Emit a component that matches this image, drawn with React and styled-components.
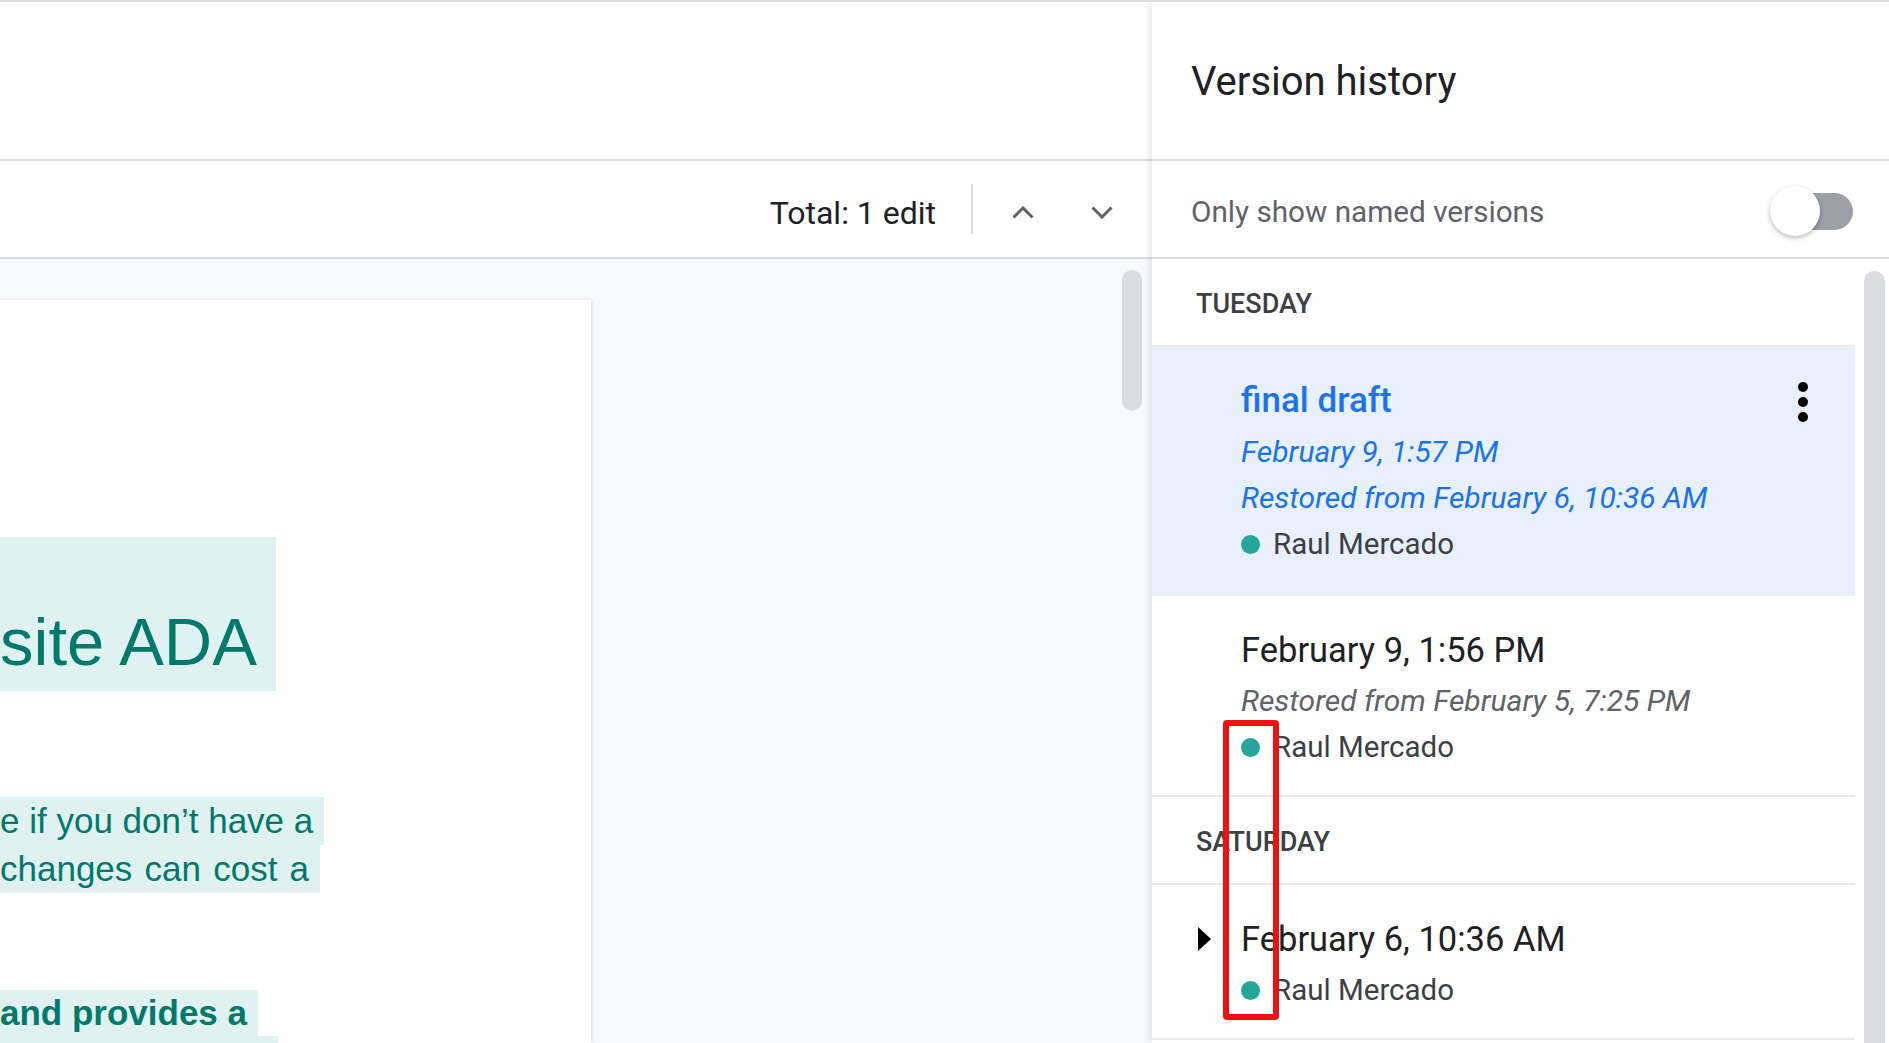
import styled, { createGlobalStyle } from "styled-components";

const GlobalStyle = createGlobalStyle`
  * {
    box-sizing: border-box;
  }
  html,
  body {
    margin: 0;
    padding: 0;
  }
  body {
    font-family: Roboto, "Liberation Sans", Arial, sans-serif;
    color: #202124;
    background: #fff;
    overflow: hidden;
  }
`;

const Shell = styled.div`
  position: relative;
  display: grid;
  grid-template-columns: 1152px 1fr;
  width: 100vw;
  height: 100vh;
  border-top: 2px solid #dadce0;
  overflow: hidden;
`;

/* ---------- left: document ---------- */

const Editor = styled.section`
  display: flex;
  flex-direction: column;
  min-width: 0;
  min-height: 0;
`;

const EditorHeader = styled.div`
  flex-shrink: 0;
  height: 159px;
  border-bottom: 2px solid #dadce0;
`;

const EditsBar = styled.div`
  flex-shrink: 0;
  height: 98px;
  display: flex;
  align-items: center;
  justify-content: flex-end;
  padding-right: 26px;
  border-bottom: 2px solid #dadce0;
`;

const EditCount = styled.span`
  margin-top: 8px;
  font-size: 32px;
  color: #202124;
`;

const BarDivider = styled.div`
  width: 2px;
  height: 50px;
  margin: 0 26px 0 35px;
  background: #dadce0;
`;

const NavButton = styled.button`
  all: unset;
  width: 48px;
  height: 48px;
  margin-top: 6px;
  display: flex;
  align-items: center;
  justify-content: center;
  cursor: pointer;
  & + & {
    margin-left: 31px;
  }
`;

const Canvas = styled.div`
  flex: 1;
  min-height: 0;
  display: flex;
  background: #f8f9fa;
  overflow: hidden;
`;

const PageColumn = styled.div`
  flex: 1;
  min-width: 0;
  padding-top: 41px;
`;

const Page = styled.div`
  width: 591px;
  height: 100%;
  padding-top: 237px;
  background: #fff;
  box-shadow: 1px 0 4px rgba(60, 64, 67, 0.16);
`;

const Heading = styled.div`
  width: fit-content;
  padding: 67px 19px 11px 0;
  font: 400 67px/76px "Liberation Sans", Arial, sans-serif;
  color: #00796b;
  background: #dff1f0;
`;

const Para = styled.div`
  margin-top: ${(p) => p.$gap}px;
`;

const Marked = styled.div`
  width: fit-content;
  padding-right: 11px;
  font: ${(p) => (p.$bold ? 700 : 400)} 35px / ${(p) => (p.$bold ? 46 : 48)}px
    "Liberation Sans", Arial, sans-serif;
  word-spacing: ${(p) => p.$spread || 0}px;
  color: #00796b;
  background: #dff1f0;
  white-space: nowrap;
`;

const ScrollThumb = styled.div`
  flex-shrink: 0;
  width: ${(p) => p.$w}px;
  height: ${(p) => p.$h}px;
  margin: ${(p) => p.$m};
  border-radius: ${(p) => p.$r};
  background: #dadce0;
`;

/* ---------- right: version history panel ---------- */

const Panel = styled.aside`
  position: relative;
  z-index: 1;
  display: flex;
  flex-direction: column;
  min-height: 0;
  background: #fff;
  box-shadow: -3px 0 6px rgba(60, 64, 67, 0.12);
`;

const PanelHeader = styled.header`
  flex-shrink: 0;
  height: 159px;
  display: flex;
  align-items: center;
  padding: 2px 0 0 39px;
  border-bottom: 2px solid #dadce0;
`;

const PanelTitle = styled.h2`
  margin: 0;
  font-size: 40px;
  font-weight: 400;
  color: #202124;
`;

const FilterRow = styled.div`
  flex-shrink: 0;
  height: 98px;
  display: flex;
  align-items: center;
  justify-content: space-between;
  padding: 0 36px 0 39px;
  border-bottom: 2px solid #dadce0;
`;

const FilterLabel = styled.span`
  margin-top: 4px;
  font-size: 29.7px;
  color: #5f6368;
`;

const Switch = styled.div`
  position: relative;
  width: 83px;
  height: 50px;
  margin-top: 4px;
`;

const SwitchTrack = styled.div`
  position: absolute;
  right: 0;
  top: 7px;
  width: 77px;
  height: 37px;
  border-radius: 19px;
  background: #9aa0a6;
`;

const SwitchThumb = styled.div`
  position: absolute;
  left: 0;
  top: 0;
  width: 50px;
  height: 50px;
  border-radius: 50%;
  background: #fff;
  box-shadow: 0 2px 5px rgba(0, 0, 0, 0.28);
`;

const VersionList = styled.div`
  flex: 1;
  min-height: 0;
  display: flex;
  overflow: hidden;
`;

const ListBody = styled.div`
  width: 703px;
  flex-shrink: 0;
`;

const DayGroup = styled.div`
  border-bottom: 2px solid #e8eaed;
`;

const DayLabel = styled.div`
  height: 88px;
  display: flex;
  align-items: center;
  padding: 4px 0 0 44px;
  border-bottom: 2px solid #e8eaed;
  font-size: 27px;
  font-weight: 500;
  color: #3c4043;
`;

const VersionItem = styled.div`
  display: grid;
  grid-template-columns: 89px 1fr auto;
  padding: 31px 0 ${(p) => (p.$selected ? 29 : 25)}px;
  background: ${(p) => (p.$selected ? "#e8f0fe" : "transparent")};
`;

const CaretCell = styled.div`
  height: 46px;
  display: flex;
  align-items: center;
  padding-left: 46px;
`;

const Details = styled.div`
  display: flex;
  flex-direction: column;
`;

const VersionTitle = styled.div`
  margin-bottom: 5px;
  font-size: ${(p) => (p.$named ? 35 : 34.5)}px;
  line-height: 46px;
  font-weight: ${(p) => (p.$named ? 500 : 400)};
  color: ${(p) => (p.$named ? "#1a73e8" : "#202124")};
`;

const Meta = styled.div`
  font-size: 30px;
  line-height: 46px;
  font-style: italic;
  color: ${(p) => (p.$selected ? "#1a73e8" : "#5f6368")};
`;

const Author = styled.div`
  display: flex;
  align-items: center;
  gap: 13px;
  font-size: 29.5px;
  line-height: 46px;
  color: #3c4043;
`;

const Dot = styled.span`
  width: 19px;
  height: 19px;
  border-radius: 50%;
  background: #26a69a;
`;

const MoreButton = styled.button`
  all: unset;
  width: 48px;
  height: 48px;
  margin-right: 28px;
  display: flex;
  align-items: center;
  justify-content: center;
  cursor: pointer;
`;

/* ---------- annotation ---------- */

const Annotation = styled.div`
  position: absolute;
  left: 1223px;
  top: 718px;
  width: 56px;
  height: 300px;
  border: 6px solid #ee1111;
  border-radius: 4px;
  z-index: 5;
  pointer-events: none;
`;

const Chevron = ({ down }) => (
  <svg width="22" height="13" viewBox="0 0 22 13">
    <polyline
      points={down ? "1.5,1.5 11,11 20.5,1.5" : "1.5,11.5 11,2 20.5,11.5"}
      fill="none"
      stroke="#5f6368"
      strokeWidth="3"
    />
  </svg>
);

const Caret = () => (
  <svg width="13" height="24" viewBox="0 0 13 24">
    <polygon points="0,0 13,12 0,24" fill="#000" />
  </svg>
);

const Kebab = () => (
  <svg width="10" height="40" viewBox="0 0 10 40">
    <circle cx="5" cy="5" r="5" fill="#000" />
    <circle cx="5" cy="20" r="5" fill="#000" />
    <circle cx="5" cy="35" r="5" fill="#000" />
  </svg>
);

const versions = [
  {
    day: "TUESDAY",
    items: [
      {
        name: "final draft",
        time: "February 9, 1:57 PM",
        restored: "Restored from February 6, 10:36 AM",
        selected: true,
      },
      {
        time: "February 9, 1:56 PM",
        restored: "Restored from February 5, 7:25 PM",
      },
    ],
  },
  {
    day: "SATURDAY",
    items: [{ time: "February 6, 10:36 AM", expandable: true }],
  },
];

export default function App() {
  return (
    <>
      <GlobalStyle />
      <Shell>
        <Editor>
          <EditorHeader />
          <EditsBar>
            <EditCount>Total: 1 edit</EditCount>
            <BarDivider />
            <NavButton aria-label="Previous edit">
              <Chevron />
            </NavButton>
            <NavButton aria-label="Next edit">
              <Chevron down />
            </NavButton>
          </EditsBar>
          <Canvas>
            <PageColumn>
              <Page>
                <Heading>site ADA</Heading>
                <Para $gap={106}>
                  <Marked>e if you don’t have a</Marked>
                  <Marked $spread={2.5}>changes can cost a</Marked>
                </Para>
                <Para $gap={97}>
                  <Marked $bold>and provides a</Marked>
                  <Marked $bold>user experience</Marked>
                </Para>
              </Page>
            </PageColumn>
            <ScrollThumb $w={20} $h={141} $m="11px 10px 0 0" $r="10px" />
          </Canvas>
        </Editor>

        <Panel>
          <PanelHeader>
            <PanelTitle>Version history</PanelTitle>
          </PanelHeader>
          <FilterRow>
            <FilterLabel>Only show named versions</FilterLabel>
            <Switch role="switch" aria-checked="false">
              <SwitchTrack />
              <SwitchThumb />
            </Switch>
          </FilterRow>
          <VersionList>
            <ListBody>
              {versions.map((group) => (
                <DayGroup key={group.day}>
                  <DayLabel>{group.day}</DayLabel>
                  {group.items.map((v) => (
                    <VersionItem key={v.time} $selected={v.selected}>
                      <CaretCell>{v.expandable && <Caret />}</CaretCell>
                      <Details>
                        {v.name ? (
                          <>
                            <VersionTitle $named>{v.name}</VersionTitle>
                            <Meta $selected>{v.time}</Meta>
                          </>
                        ) : (
                          <VersionTitle>{v.time}</VersionTitle>
                        )}
                        {v.restored && (
                          <Meta $selected={v.selected}>{v.restored}</Meta>
                        )}
                        <Author>
                          <Dot />
                          Raul Mercado
                        </Author>
                      </Details>
                      <div>
                        {v.selected && (
                          <MoreButton aria-label="More actions">
                            <Kebab />
                          </MoreButton>
                        )}
                      </div>
                    </VersionItem>
                  ))}
                </DayGroup>
              ))}
            </ListBody>
            <ScrollThumb $w={21} $h={900} $m="12px 4px 0 9px" $r="10px 10px 0 0" />
          </VersionList>
        </Panel>

        <Annotation />
      </Shell>
    </>
  );
}
